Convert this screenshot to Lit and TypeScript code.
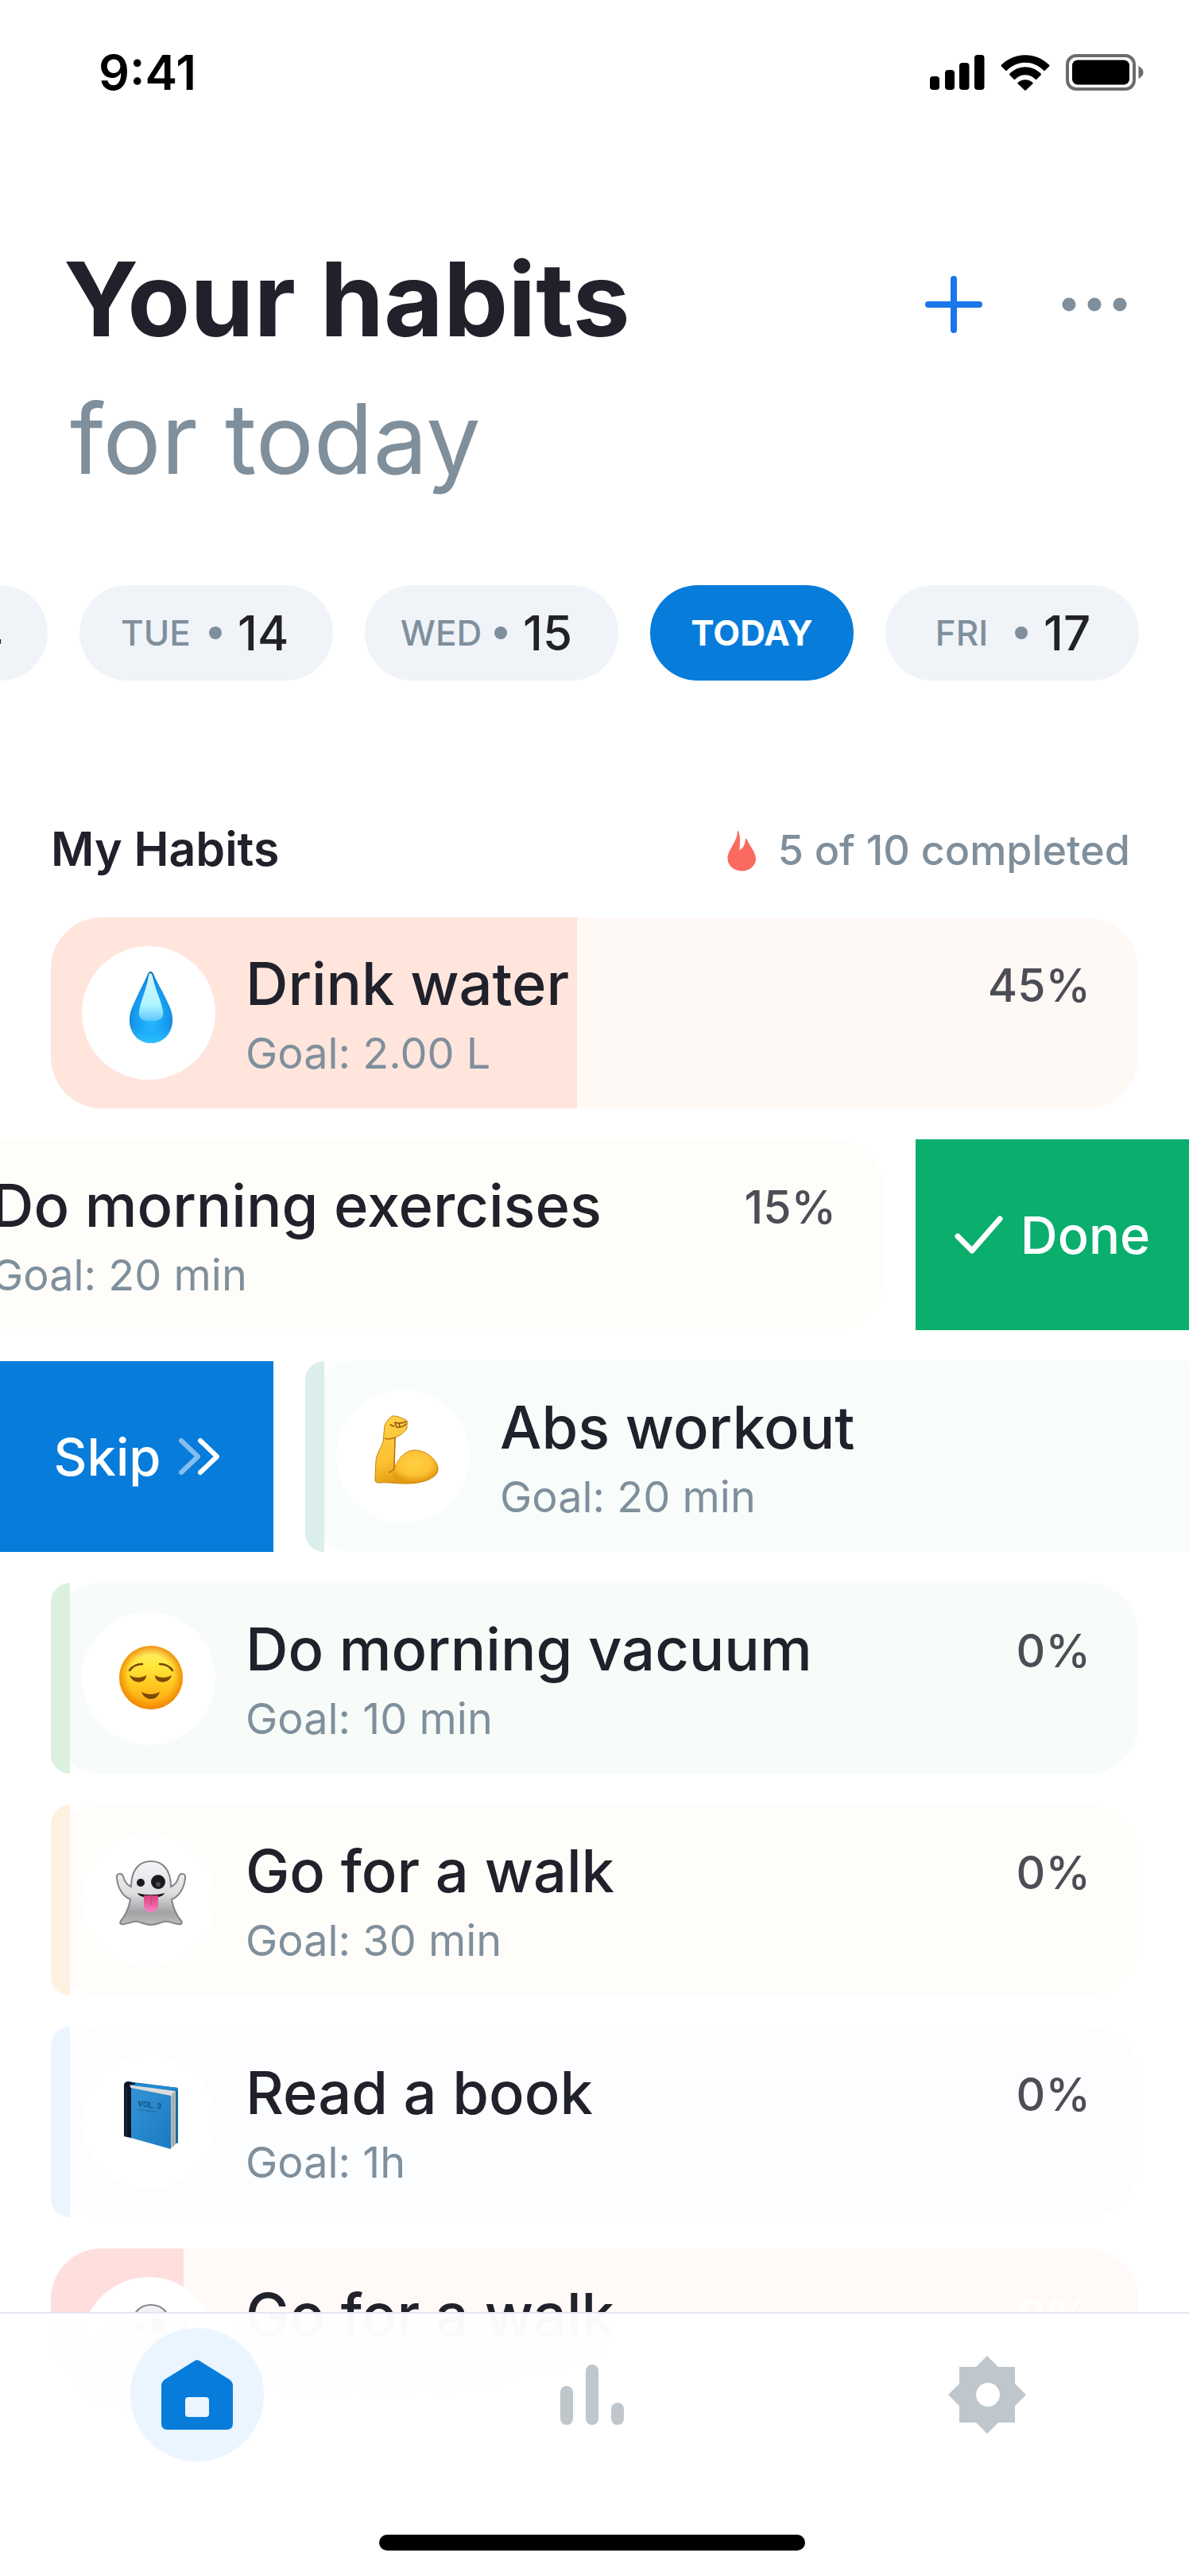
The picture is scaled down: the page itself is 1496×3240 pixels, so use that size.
import { LitElement, html, css, svg, nothing } from "lit";
import { customElement, property, state } from "lit/decorators.js";
import { classMap } from "lit/directives/class-map.js";
import { styleMap } from "lit/directives/style-map.js";

interface Habit {
  id: string;
  name: string;
  goal: string;
  percent: number;
  fill: number;
  tone: string;
  icon: string;
  swipe?: "done" | "skip";
}

const HABITS: Habit[] = [
  { id: "water", name: "Drink water", goal: "2.00 L", percent: 45, fill: 48.4, tone: "peach", icon: "drop" },
  { id: "exercise", name: "Do morning exercises", goal: "20 min", percent: 15, fill: 15, tone: "cream", icon: "face", swipe: "done" },
  { id: "abs", name: "Abs workout", goal: "20 min", percent: 0, fill: 0, tone: "teal", icon: "arm", swipe: "skip" },
  { id: "vacuum", name: "Do morning vacuum", goal: "10 min", percent: 0, fill: 0, tone: "green", icon: "face" },
  { id: "walk", name: "Go for a walk", goal: "30 min", percent: 0, fill: 0, tone: "cream", icon: "ghost" },
  { id: "book", name: "Read a book", goal: "1h", percent: 0, fill: 0, tone: "blue", icon: "book" },
  { id: "walk-late", name: "Go for a walk", goal: "30 min", percent: 0, fill: 12.2, tone: "rose", icon: "ghost" },
];

const drop = svg`
  <defs>
    <radialGradient id="drop-body" cx="50%" cy="62%" r="60%">
      <stop offset="0" stop-color="#2fc0ff"/><stop offset="0.45" stop-color="#18a4f8"/>
      <stop offset="0.75" stop-color="#1593e6"/><stop offset="1" stop-color="#0a6fae"/>
    </radialGradient>
    <linearGradient id="drop-shine" x1="0" y1="0" x2="0" y2="1">
      <stop offset="0" stop-color="#d2f3ff"/><stop offset="0.65" stop-color="#b2f6ff"/><stop offset="1" stop-color="#5cc8fb"/>
    </linearGradient>
    <linearGradient id="drop-base" x1="0" y1="0" x2="0" y2="1">
      <stop offset="0.75" stop-color="#27b9ff" stop-opacity="0"/><stop offset="1" stop-color="#2dc4ff"/>
    </linearGradient>
  </defs>
  <path d="M86 32c2 0 3 1 4 3 5 12 12 22 18 36 4 8 6 14 6 22 0 17-12 29-27 29S60 110 60 93c0-8 2-14 6-22 6-14 12-24 17-36 1-2 2-3 3-3z" fill="url(#drop-body)"/>
  <path d="M86 32c2 0 3 1 4 3 5 12 12 22 18 36 4 8 6 14 6 22 0 17-12 29-27 29S60 110 60 93c0-8 2-14 6-22 6-14 12-24 17-36 1-2 2-3 3-3z" fill="url(#drop-base)"/>
  <path d="M86 34c2 0 3 3 4 8 3 14 8 22 11 35 3 12 1 17-14 17s-17-5-14-17c3-13 7-20 10-35 1-5 1-8 3-8z" fill="url(#drop-shine)"/>`;

const arm = svg`
  <defs>
    <linearGradient id="arm-skin" x1="0" y1="0" x2="0.35" y2="1">
      <stop offset="0" stop-color="#ffd24a"/><stop offset="0.65" stop-color="#fbc132"/><stop offset="1" stop-color="#e29a12"/>
    </linearGradient>
    <radialGradient id="arm-muscle" cx="48%" cy="40%" r="60%">
      <stop offset="0" stop-color="#ffd045"/><stop offset="0.65" stop-color="#fdc233"/><stop offset="1" stop-color="#e49a10"/>
    </radialGradient>
  </defs>
  <path d="M74 33c3 0 12 4 14 5 2 2 2 4 1 5v5c0 3-10 11-15 12l-1 39c5-12 13-23 26-23 14 0 29 12 29 24 0 10-16 18-41 18-13 0-22-2-33-1-4 0-6-2-5-6l1-22c1-9 7-17 9-24l2-20c1-4 7-11 10-12z" fill="url(#arm-skin)" stroke="#c8820e" stroke-width="1"/>
  <path d="M73 99c5-12 13-22 26-22 14 0 28 11 28 22 0 10-16 17-40 17-11 0-18-4-14-17z" fill="url(#arm-muscle)"/>
  <path d="M74 60l-1 39c-1 2-4 4-7 5M61 61c4 2 8 1 13-1" fill="none" stroke="#b9700c" stroke-width="1.5"/>
  <path d="M74 41c5 2 9 1 14-1M74 41l2 6c5 1 9-1 12-4M79 42l1 4M68 44l5 2" fill="none" stroke="#8a5109" stroke-width="1.4" stroke-linecap="round"/>`;

const face = svg`
  <defs>
    <linearGradient id="face-skin" x1="0" y1="0" x2="0" y2="1">
      <stop offset="0" stop-color="#fff07a"/><stop offset="0.3" stop-color="#ffe83a"/>
      <stop offset="0.65" stop-color="#ffc51e"/><stop offset="1" stop-color="#ff9f12"/>
    </linearGradient>
    <radialGradient id="face-rim" cx="50%" cy="50%" r="50%">
      <stop offset="0.7" stop-color="#f28a00" stop-opacity="0"/><stop offset="1" stop-color="#ec8200" stop-opacity="0.85"/>
    </radialGradient>
  </defs>
  <circle cx="87" cy="83" r="40" fill="url(#face-skin)"/>
  <circle cx="87" cy="83" r="40" fill="url(#face-rim)"/>
  <path d="M60 74c4-6 9-8 16-8M114 74c-4-6-9-8-16-8" fill="none" stroke="#75450a" stroke-width="2.6" stroke-linecap="round"/>
  <path d="M60 80c6 4 15 4 21 0 0 11-17 12-21 0zM92 80c6 4 15 4 21 0-3 12-21 11-21 0z" fill="#7c4a05"/>
  <path d="M75 101c7 4 16 4 23 0-3 11-18 13-23 0z" fill="#7c4a05"/>`;

const ghost = svg`
  <defs>
    <linearGradient id="ghost-body" x1="0" y1="0" x2="0" y2="1">
      <stop offset="0" stop-color="#f4f6f9"/><stop offset="0.5" stop-color="#dedee1"/>
      <stop offset="0.8" stop-color="#a3a3a5"/><stop offset="1" stop-color="#bcbcbe"/>
    </linearGradient>
    <linearGradient id="ghost-tongue" x1="0" y1="0" x2="0" y2="1">
      <stop offset="0" stop-color="#d8407f"/><stop offset="1" stop-color="#fb7fc0"/>
    </linearGradient>
  </defs>
  <path d="M61 83C51 79 45 68 44 56c-1-6 6-7 8-2 2 8 5 11 10 13 0-17 7-32 25-32s25 15 25 32c5-2 8-5 10-13 2-5 9-4 8 2-1 12-7 23-17 27 2 12 6 20 12 27 2 3 0 5-4 4-8-1-12-4-17-3-6 1-9 4-17 4s-11-3-17-4c-5-1-9 2-17 3-4 1-6-1-4-4 6-7 10-15 12-27z" fill="url(#ghost-body)" stroke="#858588" stroke-width="2"/>
  <circle cx="74" cy="62" r="5" fill="#1b1b1d"/>
  <circle cx="96" cy="61" r="9" fill="#1b1b1d"/>
  <circle cx="96" cy="64" r="3" fill="#4c4c50"/>
  <path d="M70 75c9 3 25 3 34 0-3 8-31 8-34 0z" fill="#111"/>
  <path d="M78 78h18v12c0 12-18 12-18 0z" fill="url(#ghost-tongue)"/>
  <path d="M87 79v11" stroke="#c93a78" stroke-width="1"/>`;

const book = svg`
  <defs>
    <linearGradient id="book-cover" x1="0" y1="0" x2="1" y2="1">
      <stop offset="0" stop-color="#3494d4"/><stop offset="1" stop-color="#1a7ac2"/>
    </linearGradient>
  </defs>
  <path d="M57 33l64 8v69l-9 4z" fill="#1669a5"/>
  <path d="M66 35l55 6v3l-60-4z" fill="#1e8ad4"/>
  <path d="M57 37l61 8v67l-6 5z" fill="#b9babd"/>
  <path d="M60 38l57 7-5 6-50-9z" fill="#dcdcde"/>
  <path d="M115 48v67" stroke="#8e9094" stroke-width="1"/>
  <path d="M62 41l50 10v67L62 104z" fill="url(#book-cover)"/>
  <path d="M53 38c0-4 3-5 6-5l8 2v2c-5-1-8 0-6 3l1 1v63l-9-2z" fill="#0c1526"/>
  <path d="M56 40v62" stroke="#2c3a50" stroke-width="1"/>
  <g transform="rotate(7 70 64)" fill="#135484">
    <text x="70" y="64" class="volume">VOL. 3</text>
    <text x="70" y="69" class="author">by John Appleseed</text>
  </g>`;

const EMOJI: Record<string, unknown> = { drop, arm, face, ghost, book };

@customElement("habit-card")
class HabitCard extends LitElement {
  @property({ attribute: false }) habit!: Habit;

  static styles = css`
    :host {
      display: block;
      min-width: 0;
    }
    .card {
      position: relative;
      display: flex;
      align-items: center;
      height: 240px;
      border-radius: 64px;
      padding: 0 60px 0 39px;
      box-sizing: border-box;
      background: var(--tint);
    }
    .fill {
      position: absolute;
      left: 0;
      top: 0;
      bottom: 0;
      min-width: 24px;
      border-radius: 64px 0 0 64px;
      background: var(--fill);
    }
    .badge {
      position: relative;
      flex: none;
      width: 168px;
      height: 168px;
      border-radius: 50%;
      background: #fff;
    }
    .badge svg {
      display: block;
      width: 100%;
      height: 100%;
    }
    .volume {
      font: 700 10px Roboto, sans-serif;
    }
    .author {
      font: 400 3px Roboto, sans-serif;
    }
    .text {
      position: relative;
      flex: 1;
      margin-left: 38px;
      padding-top: 14px;
      white-space: nowrap;
    }
    .name,
    .goal {
      margin: 0;
      line-height: 88px;
    }
    .name {
      font-size: 74px;
      font-weight: 500;
      color: #20212a;
    }
    .goal {
      font-size: 54px;
      color: #7f8f9c;
    }
    .percent {
      position: relative;
      align-self: flex-start;
      margin-top: 40px;
      font-size: 57px;
      line-height: 92px;
      font-weight: 500;
      color: #4d4d56;
    }
    .peach { --tint: #fff9f6; --fill: #ffe5dc; }
    .cream { --tint: #fffdf9; --fill: #fff1e2; }
    .teal { --tint: #f8fcfb; --fill: #dbeeec; }
    .green { --tint: #f7fcf8; --fill: #dcf0e0; }
    .blue { --tint: #fbfdff; --fill: #ebf4ff; }
    .rose { --tint: #fff9f8; --fill: #ffdfde; }
    .rose .percent { color: #fff; }
  `;

  render() {
    const { name, goal, percent, fill, tone, icon } = this.habit;
    return html`
      <article class=${classMap({ card: true, [tone]: true })}>
        <div class="fill" style=${styleMap({ width: `${fill}%` })}></div>
        <div class="badge"><svg viewBox="0 0 168 168" aria-hidden="true">${EMOJI[icon]}</svg></div>
        <div class="text">
          <h3 class="name">${name}</h3>
          <p class="goal">Goal: ${goal}</p>
        </div>
        <span class="percent">${percent}%</span>
      </article>
    `;
  }
}

@customElement("app-root")
class AppRoot extends LitElement {
  @state() private day = "TODAY";
  @state() private tab = "home";

  static styles = css`
    :host {
      display: block;
      min-height: 100vh;
      background: #fff;
      color: #20212a;
      font-family: Inter, "Liberation Sans", sans-serif;
    }
    button {
      border: 0;
      padding: 0;
      background: none;
      font: inherit;
      color: inherit;
      cursor: pointer;
    }
    svg {
      display: block;
    }
    .status {
      display: flex;
      align-items: center;
      justify-content: space-between;
      height: 182px;
      padding: 0 57px 0 124px;
      color: #000;
    }
    .time {
      font-size: 61px;
      font-weight: 600;
    }
    .signals {
      display: flex;
      align-items: center;
      gap: 20px;
    }
    .header {
      display: flex;
      justify-content: space-between;
      padding: 106px 78px 0 80px;
    }
    .title {
      margin: 0;
      font-size: 129px;
      line-height: 176px;
      font-weight: 700;
    }
    .title span {
      display: block;
      padding-left: 8px;
      font-size: 122px;
      font-weight: 400;
      color: #7f8f9c;
    }
    .actions {
      display: flex;
      align-items: center;
      gap: 100px;
      height: 190px;
    }
    .days {
      display: flex;
      gap: 40px;
      margin-top: 96px;
      overflow: hidden;
    }
    .day {
      display: flex;
      align-items: center;
      flex: none;
      width: 319px;
      height: 120px;
      border-radius: 60px;
      padding-left: 32px;
      box-sizing: border-box;
      background: #f0f4f9;
      white-space: nowrap;
    }
    .day:first-child {
      margin-left: -259px;
    }
    .weekday {
      width: 128px;
      font-size: 44px;
      font-weight: 500;
      text-align: center;
      color: #7f8f9c;
    }
    .dot {
      width: 16px;
      height: 16px;
      margin: 0 20px 0 3px;
      border-radius: 50%;
      background: #7f8f9c;
    }
    .date {
      font-size: 60px;
      font-weight: 500;
      color: #222226;
    }
    .day.active {
      justify-content: center;
      width: 256px;
      padding: 0;
      background: #077cdb;
      color: #fff;
      font-size: 44px;
      font-weight: 700;
    }
    .section {
      display: flex;
      align-items: center;
      justify-content: space-between;
      margin-top: 172px;
      padding: 0 74px 0 64px;
      line-height: 76px;
    }
    .heading {
      margin: 0;
      font-size: 59px;
      font-weight: 600;
    }
    .completed {
      display: flex;
      align-items: center;
      gap: 28px;
      padding-top: 4px;
      font-size: 52px;
      font-weight: 500;
      color: #7f8f9c;
    }
    .list {
      display: flex;
      flex-direction: column;
      gap: 39px;
      margin: 0;
      padding: 46px 0 100px;
      list-style: none;
    }
    .row {
      display: flex;
      gap: 40px;
      overflow: hidden;
    }
    .row habit-card {
      flex: none;
      width: calc(100% - 128px);
    }
    .row.rest {
      padding: 0 64px;
    }
    .row.rest habit-card {
      width: 100%;
    }
    .row.done habit-card {
      margin-left: -256px;
    }
    .swipe {
      display: flex;
      align-items: center;
      justify-content: center;
      gap: 22px;
      flex: none;
      width: 344px;
      font-size: 65px;
      font-weight: 500;
      color: #fff;
    }
    .swipe.done { background: #0aae6d; }
    .swipe.skip { background: #077cdb; }
    .bottom {
      position: fixed;
      left: 0;
      right: 0;
      bottom: 0;
      display: flex;
      flex-direction: column;
      align-items: center;
      padding-right: 6px;
      border-top: 2px solid #e3e8f1;
      background: rgba(255, 255, 255, 0.95);
      backdrop-filter: blur(50px);
    }
    .tabs {
      display: grid;
      grid-template-columns: repeat(3, 1fr);
      justify-items: center;
      align-self: stretch;
      padding-top: 18px;
    }
    .tab {
      display: grid;
      place-items: center;
      width: 168px;
      height: 168px;
      border-radius: 50%;
      color: #bfc6cc;
    }
    .tab.active {
      background: #eaf5ff;
      color: #077cdb;
    }
    .indicator {
      width: 36%;
      height: 20px;
      margin: 92px 0 32px;
      border-radius: 10px;
      background: #000;
    }
  `;

  private renderStatus() {
    return html`
      <div class="status">
        <span class="time">9:41</span>
        <div class="signals">
          <svg width="69" height="44" viewBox="0 0 69 44" role="img" aria-label="Signal">
            <rect x="0" y="27" width="12" height="17" rx="4"/>
            <rect x="19" y="19" width="12" height="25" rx="4"/>
            <rect x="37" y="10" width="12.5" height="34" rx="4"/>
            <rect x="56" y="0" width="12.5" height="44" rx="4"/>
          </svg>
          <svg width="62" height="45" viewBox="0 0 62 45" role="img" aria-label="Wi-Fi">
            <path d="M1 12.5C18-4 44-4 61 12.5q1 1 0 2l-5 5q-1 1-2 0C41 6.5 21 6.5 8 19.5q-1 1-2 0l-5-5q-1-1 0-2z"/>
            <path d="M11.5 23.5c11-11 28-11 39 0q1 1 0 2l-5 5q-1 1-2 0c-7-7-18-7-25 0q-1 1-2 0l-5-5q-1-1 0-2z"/>
            <path d="M22 34.5c5-4.5 13-4.5 18 0q1.5 1 0 2.2l-8 7.5q-1 1-2 0l-8-7.5q-1.5-1.2 0-2.2z"/>
          </svg>
          <svg width="98" height="46" viewBox="0 0 98 46" role="img" aria-label="Battery">
            <rect x="2" y="2" width="84" height="42" rx="11" fill="none" stroke="#6b6b6b" stroke-width="4"/>
            <rect x="8" y="7.5" width="72" height="31" rx="7"/>
            <path d="M91.5 15c8 4 8 12 0 16z" fill="#6b6b6b"/>
          </svg>
        </div>
      </div>
    `;
  }

  private renderDay(label: string, date?: string) {
    const active = label === "TODAY";
    return html`
      <button
        class=${classMap({ day: true, active })}
        aria-pressed=${this.day === label ? "true" : "false"}
        @click=${() => (this.day = label)}
      >
        ${active
          ? label
          : html`<span class="weekday">${label}</span><span class="dot"></span><span class="date">${date}</span>`}
      </button>
    `;
  }

  private renderRow(habit: Habit) {
    const done = html`
      <button class="swipe done">
        <svg width="61" height="48" viewBox="0 0 61 48" aria-hidden="true">
          <path d="M4 26l18 18L57 4" fill="none" stroke="#fff" stroke-width="7" stroke-linecap="round" stroke-linejoin="round"/>
        </svg>
        Done
      </button>`;
    const skip = html`
      <button class="swipe skip">
        Skip
        <svg width="52" height="48" viewBox="0 0 52 48" aria-hidden="true" fill="none" stroke="#fff" stroke-width="6" stroke-linecap="round" stroke-linejoin="round">
          <path d="M4 4l21 20L4 44" opacity="0.5"/>
          <path d="M28 4l21 20-21 20"/>
        </svg>
      </button>`;
    return html`
      <li class="row ${habit.swipe ?? "rest"}">
        ${habit.swipe === "skip" ? skip : nothing}
        <habit-card .habit=${habit}></habit-card>
        ${habit.swipe === "done" ? done : nothing}
      </li>
    `;
  }

  private renderTab(id: string, label: string, icon: unknown) {
    const active = this.tab === id;
    return html`
      <button class=${classMap({ tab: true, active })} aria-label=${label} @click=${() => (this.tab = id)}>
        ${icon}
      </button>
    `;
  }

  render() {
    const home = html`
      <svg width="90" height="88" viewBox="0 0 90 88" fill="currentColor">
        <path fill-rule="evenodd" d="M42.5 1Q45 -.5 47.5 1L86 25q4 3 4 8v47q0 8-8 8H8q-8 0-8-8V33q0-5 4-8zM34 47q-4 0-4 4v17q0 4 4 4h22q4 0 4-4V51q0-4-4-4z"/>
      </svg>`;
    const stats = html`
      <svg width="80" height="76" viewBox="0 0 80 76" fill="currentColor">
        <rect x="0" y="27" width="16" height="49" rx="8"/>
        <rect x="32" y="0" width="16" height="76" rx="8"/>
        <rect x="64" y="48" width="16" height="28" rx="8"/>
      </svg>`;
    const settings = html`
      <svg width="98" height="98" viewBox="0 0 98 98" fill="currentColor">
        <path fill-rule="evenodd" d="M49 0l14 14h21v21l14 14-14 14v21H63L49 98 35 84H14V63L0 49l14-14V14h21zM50 34a15 15 0 1 0 .1 0z"/>
      </svg>`;
    return html`
      ${this.renderStatus()}
      <main>
        <header class="header">
          <h1 class="title">Your habits<span>for today</span></h1>
          <div class="actions">
            <button aria-label="Add habit">
              <svg width="72" height="72" viewBox="0 0 72 72" stroke="#1b76e8" stroke-width="8" stroke-linecap="round">
                <path d="M36 4v64M4 36h64"/>
              </svg>
            </button>
            <button aria-label="More">
              <svg width="82" height="18" viewBox="0 0 82 18" fill="#7f8f9c">
                <circle cx="9" cy="9" r="8.5"/><circle cx="41" cy="9" r="8.5"/><circle cx="73" cy="9" r="8.5"/>
              </svg>
            </button>
          </div>
        </header>
        <div class="days">
          ${this.renderDay("MON", "14")} ${this.renderDay("TUE", "14")} ${this.renderDay("WED", "15")}
          ${this.renderDay("TODAY")} ${this.renderDay("FRI", "17")}
        </div>
        <div class="section">
          <h2 class="heading">My Habits</h2>
          <div class="completed">
            <svg width="36" height="52" viewBox="0 0 36 52" fill="#fb6a60" aria-hidden="true">
              <path d="M13 1.5Q13.5 0 14.2 1.5C16.5 8 16.5 17 15.3 25c4-1 7-6 7.500-13 .3-2 1.3-2 2 0C29 21 36 28 36 36 36 45 28 51.500 18.500 51.500S.5 45 .5 36C.5 24 12 17 13 1.500z"/>
            </svg>
            5 of 10 completed
          </div>
        </div>
        <ul class="list">
          ${HABITS.map((habit) => this.renderRow(habit))}
        </ul>
      </main>
      <div class="bottom">
        <nav class="tabs">
          ${this.renderTab("home", "Home", home)}
          ${this.renderTab("stats", "Statistics", stats)}
          ${this.renderTab("settings", "Settings", settings)}
        </nav>
        <div class="indicator"></div>
      </div>
    `;
  }
}
